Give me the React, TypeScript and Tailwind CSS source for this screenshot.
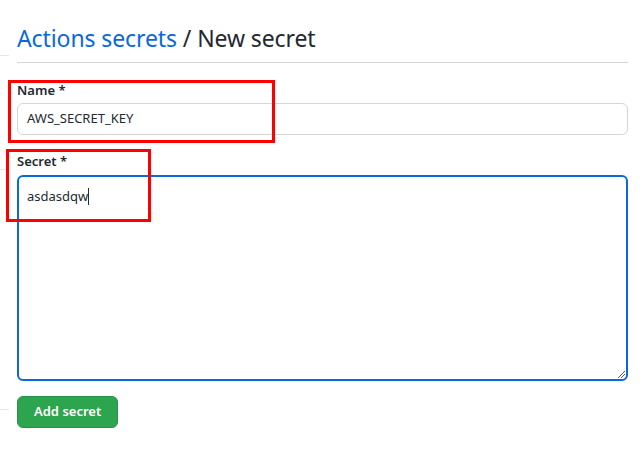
import React from "react";

export default function App() {
  const font = { fontFamily: '"Noto Sans", "Open Sans", sans-serif' };
  return (
    <div className="relative w-[643px] h-[462px] bg-white overflow-hidden" style={font}>
      <div className="flex">
        {/* left strip fragments of a side nav */}
        <div className="w-[9px] shrink-0 flex flex-col">
          <div className="h-[56px] border-b border-[#e5e7eb]" />
          <div className="h-[114px] border-b border-[#e5e7eb]" />
          <div className="h-[240px] border-b border-[#e5e7eb]" />
        </div>
        <div className="ml-[8px] w-[611px] flex flex-col">
          <div className="pt-[20px] pb-[6px] border-b border-[#d0d7de]">
            <h1 className="text-[23px] leading-[36px] tracking-[-0.1px] font-normal text-[#24292f]">
              <span className="text-[#0969da]">Actions secrets</span> / New secret
            </h1>
          </div>
          <label className="mt-[17px] text-[13px] leading-[21px] font-semibold text-[#24292f]">Name *</label>
          <div className="mt-[2px] h-[32px] border border-[#d0d7de] rounded-[6px] bg-white flex items-center px-[9px] text-[13px] text-[#24292f]">
            AWS_SECRET_KEY
          </div>
          <label className="mt-[16px] text-[13px] leading-[21px] font-semibold text-[#24292f]">Secret *</label>
          <div className="relative mt-[3px] h-[206px] border-2 border-[#0969da] rounded-[6px] bg-white px-[8px] pt-[9px] text-[13px] leading-[20px] text-[#24292f]">
            <span>asdasdqw</span>
            <span className="inline-block w-px h-[17px] bg-[#24292f] align-[-4px]" />
            <svg className="absolute right-[1px] bottom-[1px]" width="8" height="8" viewBox="0 0 8 8">
              <line x1="1" y1="8" x2="8" y2="1" stroke="#555" strokeWidth="1" />
              <line x1="4" y1="8" x2="8" y2="4" stroke="#555" strokeWidth="1" />
            </svg>
          </div>
          <div className="mt-[15px]">
            <button className="h-[32px] px-[16px] rounded-[6px] bg-[#2da44e] border border-[#2a9147] text-white text-[13px] font-semibold">
              Add secret
            </button>
          </div>
        </div>
      </div>
      {/* red annotation boxes */}
      <div className="absolute left-[8px] top-[80px] w-[267px] h-[63px] border-[3px] border-[#ff0000]" />
      <div className="absolute left-[6px] top-[149px] w-[145px] h-[73px] border-[3px] border-[#ff0000]" />
    </div>
  );
}
